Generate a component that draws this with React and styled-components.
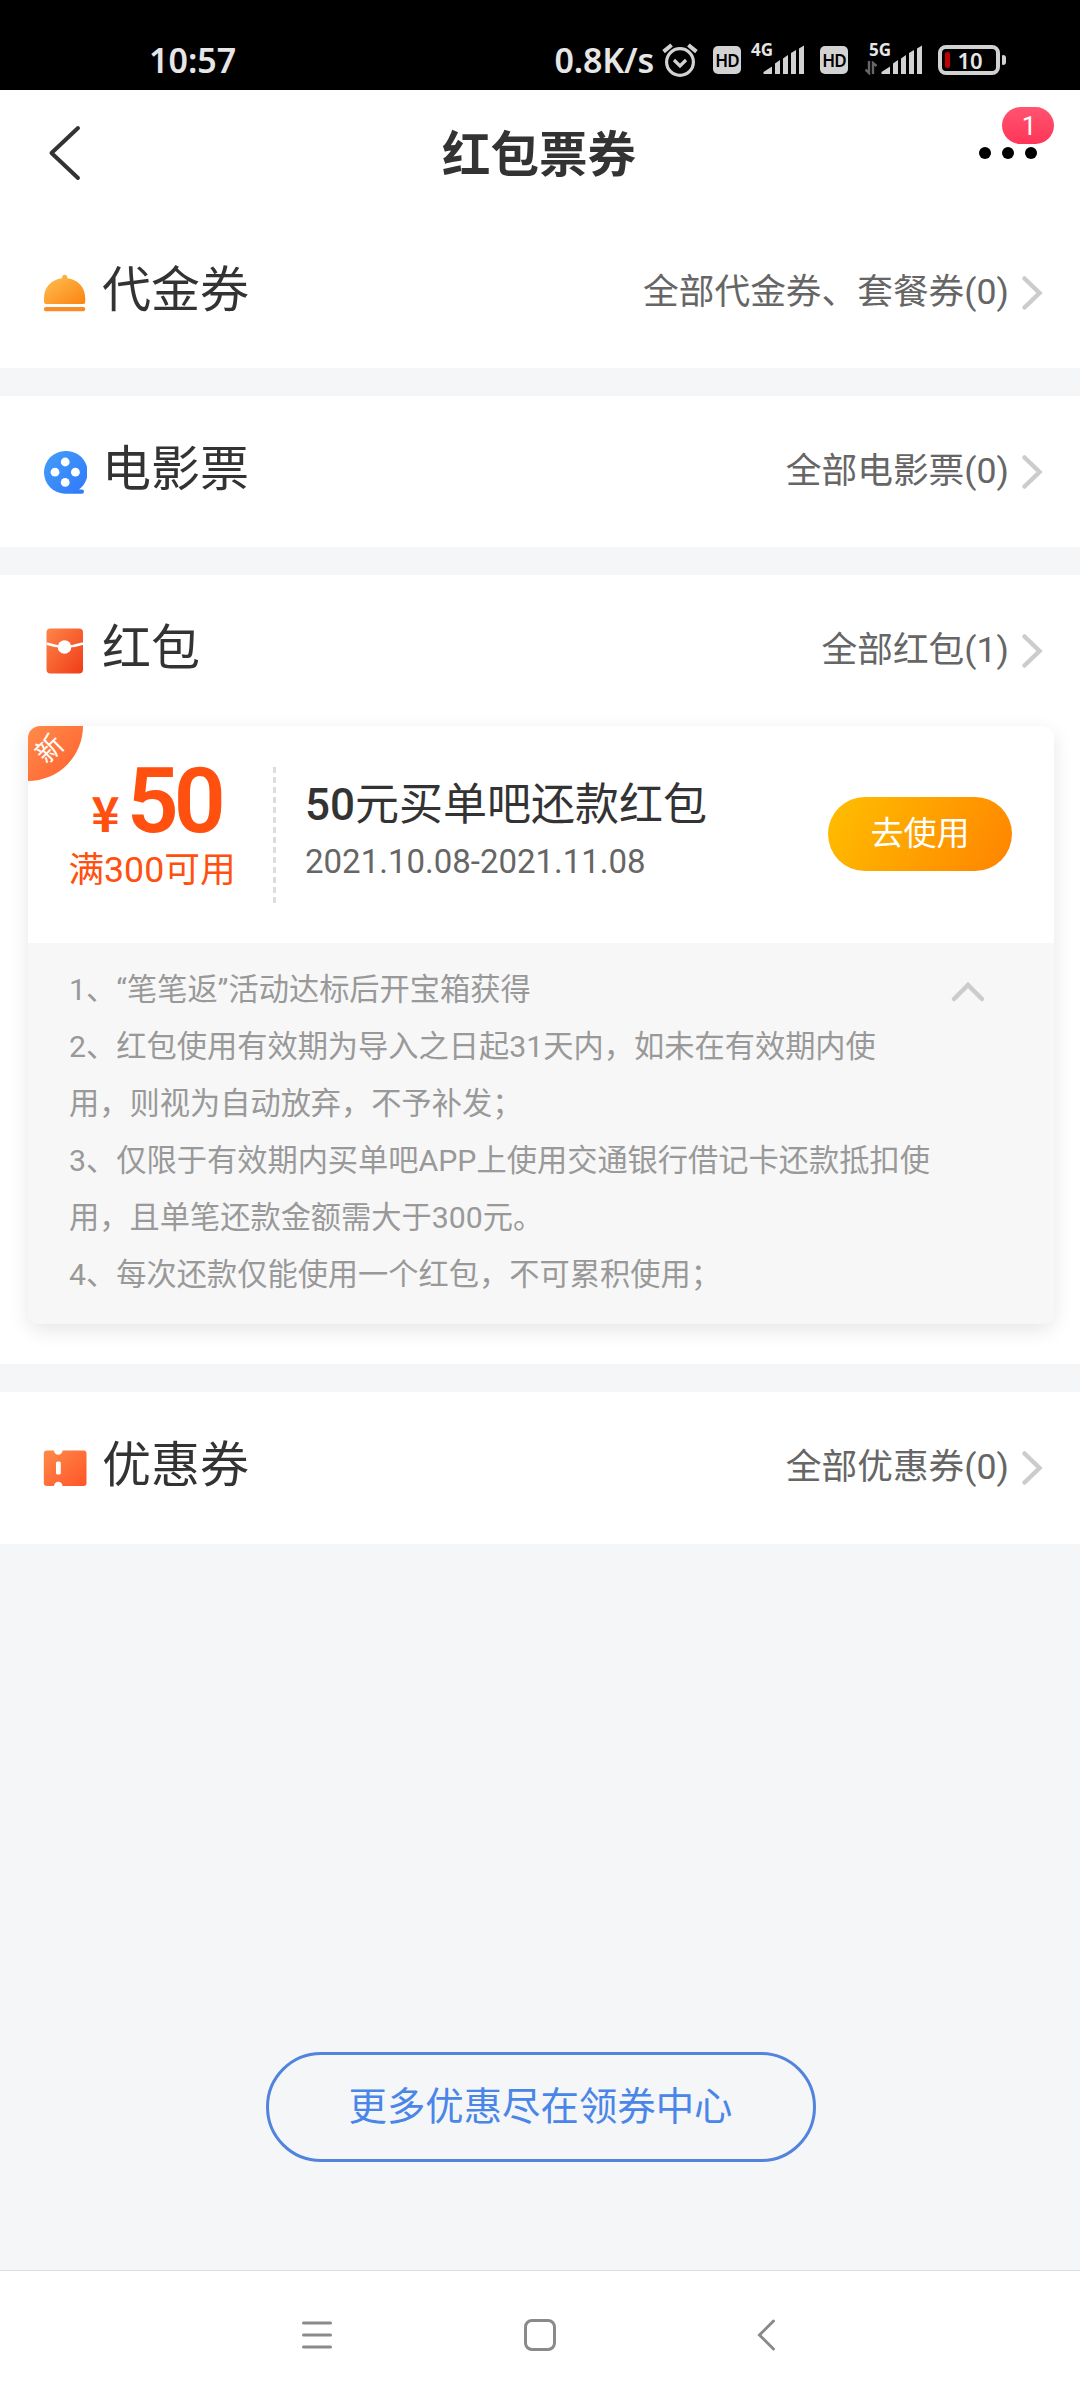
import { useState } from "react";
import styled, { createGlobalStyle } from "styled-components";

const sections = {
    voucher: { title: "代金券", link: "全部代金券、套餐券(0)" },
    movie: { title: "电影票", link: "全部电影票(0)" },
    packet: { title: "红包", link: "全部红包(1)" },
    discount: { title: "优惠券", link: "全部优惠券(0)" },
};

const rules = [
    "1、“笔笔返”活动达标后开宝箱获得",
    "2、红包使用有效期为导入之日起31天内，如未在有效期内使用，则视为自动放弃，不予补发；",
    "3、仅限于有效期内买单吧APP上使用交通银行借记卡还款抵扣使用，且单笔还款金额需大于300元。",
    "4、每次还款仅能使用一个红包，不可累积使用；",
];

const AlarmIcon = () => (
    <svg width="36" height="36" viewBox="0 0 36 36" fill="none" stroke="#d2d2d2" strokeWidth="3.2">
        <circle cx="18" cy="20" r="13.4" />
        <path d="M12 18l6 6 6-6" />
        <path d="M1.6 9.6L9.6 3M34.4 9.6L26.4 3" strokeWidth="4" />
    </svg>
);

const SignalBars = () => (
    <svg width="42" height="30" viewBox="0 0 42 30" fill="#d2d2d2">
        <path d="M0.5 29V27L9 21.500V29Z" />
        <path d="M12 29V18.500L17 15V29Z" />
        <path d="M20 29V13.500L25 10V29Z" />
        <path d="M28 29V8L33 5V29Z" />
        <path d="M36 29V3.500L41 0.500V29Z" />
    </svg>
);

const DataArrows = () => (
    <svg width="12" height="14" viewBox="0 0 12 14" fill="none" stroke="#666" strokeWidth="2.4">
        <path d="M4 0V12L0.500 8.500" />
        <path d="M8 13V2L11.500 5" />
    </svg>
);

const BackIcon = () => (
    <svg width="36" height="58" viewBox="0 0 36 58" fill="none" stroke="#333" strokeWidth="4" strokeLinecap="round" strokeLinejoin="round">
        <path d="M32 4L5.500 29L32 54" />
    </svg>
);

const ChevronRight = () => (
    <svg width="22" height="38" viewBox="0 0 22 38" fill="none" stroke="#ccc" strokeWidth="4.500" strokeLinecap="round">
        <path d="M3.500 4.500L18.500 19L3.500 33.500" />
    </svg>
);

const BellIcon = () => (
    <svg width="44" height="48" viewBox="0 0 44 48">
        <defs>
            <linearGradient id="bell" x1="0" y1="0" x2="1" y2="1">
                <stop offset="0.1" stopColor="#ffbb4d" />
                <stop offset="1" stopColor="#fb8312" />
            </linearGradient>
        </defs>
        <path fill="url(#bell)" d="M19 9.200C19 6.800 20.200 5.800 21.700 5.800S24.400 6.800 24.400 9.200C35.200 10.500 42.200 18.500 42.200 29V33Q42.200 35 40.200 35H3Q1 35 1 33V29C1 18.500 8 10.500 19 9.200Z" />
        <rect x="1" y="38" width="41.200" height="4.300" rx="1.800" fill="#fa8c28" />
    </svg>
);

const FilmIcon = () => (
    <svg width="44" height="48" viewBox="0 0 44 48">
        <defs>
            <linearGradient id="film" x1="0" y1="0" x2="1" y2="1">
                <stop offset="0" stopColor="#449ef9" />
                <stop offset="1" stopColor="#2f78fb" />
            </linearGradient>
        </defs>
        <path fill="url(#film)" d="M22.300 3A21.300 21.300 0 0 0 22.300 45.700H38.800Q41 45.700 41 43.500T38.800 41.400H36A21.300 21.300 0 0 0 22.300 3Z" />
        <g fill="#fff">
            <circle cx="22.200" cy="14" r="4.400" />
            <circle cx="12" cy="24.200" r="4.400" />
            <circle cx="32.400" cy="24.200" r="4.400" />
            <circle cx="22.200" cy="34.400" r="4.400" />
        </g>
    </svg>
);

const PacketIcon = () => (
    <svg width="44" height="48" viewBox="0 0 44 48">
        <defs>
            <linearGradient id="packet" x1="0" y1="0" x2="1" y2="1">
                <stop offset="0" stopColor="#ff8548" />
                <stop offset="1" stopColor="#ef3c18" />
            </linearGradient>
        </defs>
        <rect x="3.500" y="1.500" width="36.500" height="45" rx="4" fill="url(#packet)" />
        <path d="M3.500 16.500Q21.500 23 40 16.500" fill="none" stroke="#fff" strokeWidth="2.600" />
        <circle cx="21.500" cy="20" r="6.800" fill="#fff" />
    </svg>
);

const TicketIcon = () => (
    <svg width="44" height="48" viewBox="0 0 44 48">
        <defs>
            <linearGradient id="ticket" x1="0" y1="0" x2="1" y2="1">
                <stop offset="0" stopColor="#ff8b4a" />
                <stop offset="1" stopColor="#ff5428" />
            </linearGradient>
        </defs>
        <path fill="url(#ticket)" d="M4 6.500H11A4 4 0 0 0 19.500 6.500H40.500Q43.500 6.500 43.500 9.500V39Q43.500 42 40.500 42H19.500A4 4 0 0 0 11 42H4Q0.800 42 0.800 39V9.500Q0.800 6.500 4 6.500Z" />
        <rect x="13" y="17.500" width="4.800" height="13" rx="1.500" fill="#fff" />
    </svg>
);

const Section = ({ icon, data, height, children }) => (
    <Panel $height={height}>
        <SectionHead>
            {icon}
            <SectionTitle>{data.title}</SectionTitle>
            <SectionLink>{data.link}</SectionLink>
            <ChevronRight />
        </SectionHead>
        {children}
    </Panel>
);

const App = () => {

    const [isOpen, setIsOpen] = useState(true);

    return (
        <>
            <GlobalStyle />
            <Screen lang="zh-CN">
                <StatusBar>
                    <Clock>10:57</Clock>
                    <Speed>0.8K/s</Speed>
                    <AlarmIcon />
                    <HdBadge $left={15}>HD</HdBadge>
                    <Signal $left={10}>
                        <Network>4G</Network>
                        <SignalBars />
                    </Signal>
                    <HdBadge $left={15}>HD</HdBadge>
                    <Signal $left={17}>
                        <Network>5G</Network>
                        <DataArrows />
                        <SignalBars />
                    </Signal>
                    <Battery>
                        <Charge />
                        <Level>10</Level>
                    </Battery>
                    <BatteryTip />
                </StatusBar>
                <Header>
                    <BackIcon />
                    <Title>红包票券</Title>
                    <More>
                        <Dot />
                        <Dot />
                        <Dot />
                        <Badge>1</Badge>
                    </More>
                </Header>
                <List>
                    <Section icon={<BellIcon />} data={sections.voucher} height={151} />
                    <Section icon={<FilmIcon />} data={sections.movie} height={151} />
                    <Section icon={<PacketIcon />} data={sections.packet} height={789}>
                        <Card>
                            <Coupon>
                                <Corner>
                                    <CornerText>新</CornerText>
                                </Corner>
                                <Worth>
                                    <Amount>
                                        <Yen>¥</Yen>
                                        50
                                    </Amount>
                                    <Limit>满300可用</Limit>
                                </Worth>
                                <Divider />
                                <Info>
                                    <Name><b>50</b>元买单吧还款红包</Name>
                                    <Dates>2021.10.08-2021.11.08</Dates>
                                </Info>
                                <UseButton>去使用</UseButton>
                            </Coupon>
                            <Rules>
                                <RuleText>
                                    {(isOpen ? rules : rules.slice(0, 1)).map((item) => {
                                        return <p key={item}>{item}</p>
                                    })}
                                </RuleText>
                                <Toggle onClick={() => setIsOpen(!isOpen)}>
                                    <svg width="36" height="24" viewBox="0 0 36 24" fill="none" stroke="#ccc" strokeWidth="4.500" strokeLinecap="round">
                                        <path d="M4 19L18 5L32 19" />
                                    </svg>
                                </Toggle>
                            </Rules>
                        </Card>
                    </Section>
                    <Section icon={<TicketIcon />} data={sections.discount} height={152} />
                </List>
                <CenterButton>更多优惠尽在领券中心</CenterButton>
                <NavBar>
                    <svg width="34" height="36" viewBox="0 0 34 36" stroke="#8a8a8a" strokeWidth="3" strokeLinecap="round">
                        <path d="M3.500 6H30.500M3.500 18H30.500M3.500 30H30.500" />
                    </svg>
                    <HomeKey />
                    <svg width="34" height="36" viewBox="0 0 34 36" fill="none" stroke="#8a8a8a" strokeWidth="3" strokeLinecap="round">
                        <path d="M24.500 4L10.500 18L24.500 32" />
                    </svg>
                </NavBar>
            </Screen>
        </>
    )
}

const GlobalStyle = createGlobalStyle`
    * {
        box-sizing: border-box;
    }

    body {
        margin: 0;
    }

    p {
        margin: 0;
    }

    svg {
        display: block;
        flex-shrink: 0;
    }

    button {
        padding: 0;
        border: none;
        background: none;
        font-family: inherit;
    }
`;

const Screen = styled.div`
    width: 1080px;
    height: 2400px;
    display: flex;
    flex-direction: column;
    background-color: #f4f6f8;
    color: #333;
    font-family: Roboto, "Noto Sans CJK SC", sans-serif;
`;

const StatusBar = styled.div`
    height: 90px;
    display: flex;
    align-items: center;
    padding: 30px 74px 0 149px;
    background-color: black;
    color: #e6e6e6;
    font-family: "Noto Sans", sans-serif;
    font-weight: 600;
    white-space: nowrap;
`;

const Clock = styled.div`
    font-size: 34px;
    line-height: 60px;
`;

const Speed = styled.div`
    margin-left: auto;
    margin-right: 8px;
    font-size: 34px;
    letter-spacing: -0.2px;
    line-height: 60px;
`;

const HdBadge = styled.div`
    width: 28px;
    height: 28px;
    margin-left: ${(props) => props.$left}px;
    border-radius: 5px;
    background-color: #d2d2d2;
    color: black;
    font-size: 17px;
    line-height: 29px;
    letter-spacing: -0.8px;
    text-align: center;
`;

const Signal = styled.div`
    position: relative;
    height: 30px;
    display: flex;
    align-items: flex-end;
    justify-content: flex-end;
    gap: 4px;
    min-width: 54px;
    margin-left: ${(props) => props.$left}px;
`;

const Network = styled.span`
    position: absolute;
    right: 32px;
    top: -4px;
    font-size: 17px;
    font-weight: 700;
    line-height: 17px;
`;

const Battery = styled.div`
    width: 62px;
    height: 30px;
    margin-left: 15px;
    display: flex;
    align-items: center;
    padding-left: 3px;
    border: 4px solid #d2d2d2;
    border-radius: 8px;
`;

const Charge = styled.div`
    width: 5px;
    height: 16px;
    border-radius: 2px;
    background-color: #c00000;
`;

const Level = styled.div`
    flex: 1;
    padding-right: 6px;
    font-size: 22px;
    line-height: 22px;
    text-align: center;
`;

const BatteryTip = styled.div`
    width: 4px;
    height: 10px;
    margin-left: 2px;
    border-radius: 1px 3px 3px 1px;
    background-color: #d2d2d2;
`;

const Header = styled.div`
    height: 127px;
    display: flex;
    justify-content: space-between;
    padding: 34px 43px 0 46px;
    background-color: white;
`;

const Title = styled.h1`
    margin: 2px 0 0 17px;
    font-size: 48.500px;
    line-height: 60px;
    font-weight: 700;
`;

const More = styled.div`
    position: relative;
    height: 58px;
    display: flex;
    align-items: center;
    gap: 11px;
`;

const Dot = styled.div`
    width: 12px;
    height: 12px;
    border-radius: 50%;
    background-color: black;
`;

const Badge = styled.div`
    position: absolute;
    right: -17px;
    top: -17px;
    width: 52px;
    height: 37px;
    padding-left: 2px;
    border-radius: 19px;
    background: linear-gradient(#ff5470, #ff3558);
    color: white;
    font-size: 26px;
    line-height: 38px;
    text-align: center;
`;

const List = styled.div`
    display: flex;
    flex-direction: column;
    gap: 28px;
`;

const Panel = styled.section`
    height: ${(props) => props.$height}px;
    background-color: white;
`;

const SectionHead = styled.div`
    height: 151px;
    display: flex;
    align-items: center;
    padding: 0 37px 0 43px;
`;

const SectionTitle = styled.h2`
    flex: 1;
    margin: 0 0 3px 15px;
    font-size: 49px;
    line-height: 60px;
    font-weight: 400;
`;

const SectionLink = styled.span`
    margin-right: 12px;
    margin-bottom: 9px;
    color: #666;
    font-size: 35.700px;
`;

const Card = styled.div`
    position: relative;
    width: 1026px;
    height: 598px;
    margin: 0 auto 0 28px;
    border-radius: 12px;
    overflow: hidden;
    box-shadow: 0 6px 20px rgba(0, 0, 0, 0.1);
`;

const Coupon = styled.div`
    height: 217px;
    display: flex;
    align-items: flex-start;
    background-color: white;
`;

const Corner = styled.div`
    position: absolute;
    left: 0;
    top: 0;
    width: 55px;
    height: 55px;
    border-radius: 0 0 55px 0;
    background: linear-gradient(135deg, #ff8b4a, #ff5f2d);
`;

const CornerText = styled.div`
    width: 44px;
    height: 46px;
    color: white;
    font-size: 27px;
    line-height: 46px;
    text-align: center;
    transform: rotate(-45deg);
`;

const Worth = styled.div`
    width: 245px;
    display: flex;
    flex-direction: column;
    align-items: center;
    padding: 32px 0 0 3px;
    color: #ff5010;
`;

const Amount = styled.div`
    display: flex;
    align-items: baseline;
    height: 86px;
    margin-left: 8px;
    font-size: 91px;
    line-height: 86px;
    font-weight: 600;
    letter-spacing: -5px;
`;

const Yen = styled.span`
    margin-right: 7px;
    font-family: "Noto Sans CJK SC", sans-serif;
    font-size: 48px;
    font-weight: 700;
    line-height: 48px;
    letter-spacing: 0;
`;

const Limit = styled.div`
    margin-top: 1px;
    font-size: 35.700px;
    line-height: 50px;
`;

const Divider = styled.div`
    width: 3px;
    height: 136px;
    margin-top: 41px;
    background: repeating-linear-gradient(#ddd 0 6px, transparent 6px 10px);
`;

const Info = styled.div`
    flex: 1;
    padding: 49px 0 0 29px;
`;

const Name = styled.div`
    font-size: 44px;
    line-height: 60px;

    b {
        font-weight: 500;
    }
`;

const Dates = styled.div`
    margin-top: 5px;
    color: #666;
    font-size: 33px;
    line-height: 44px;
`;

const UseButton = styled.button`
    width: 184px;
    height: 74px;
    margin: 71px 42px 0 0;
    border-radius: 37px;
    background: linear-gradient(120deg, #ffbf00, #ff8300);
    color: white;
    font-size: 33px;
    line-height: 74px;
`;

const Rules = styled.div`
    height: 381px;
    display: flex;
    justify-content: space-between;
    align-items: flex-start;
    padding: 18px 68px 0 41px;
    background-color: #f7f7f7;
`;

const RuleText = styled.div`
    width: 863px;
    color: #999;
    font-size: 30.240px;
    line-height: 57.100px;
`;

const Toggle = styled.button`
    margin: 19px 0 0 -20px;

    :hover {
        cursor: pointer;
    }
`;

const CenterButton = styled.button`
    width: 550px;
    height: 110px;
    margin: auto auto 108px 266px;
    padding-right: 1px;
    border: 3px solid #5283dd;
    border-radius: 55px;
    color: #4a85e8;
    font-size: 38.400px;
    line-height: 104px;
`;

const NavBar = styled.div`
    height: 130px;
    display: flex;
    justify-content: space-between;
    padding: 46px 297px 0 300px;
    border-top: 1px solid #dcdfe2;
    background-color: white;
`;

const HomeKey = styled.div`
    width: 32px;
    height: 32px;
    margin: 2px 3px 0 0;
    border: 3px solid #8a8a8a;
    border-radius: 8px;
`;

export default App;
